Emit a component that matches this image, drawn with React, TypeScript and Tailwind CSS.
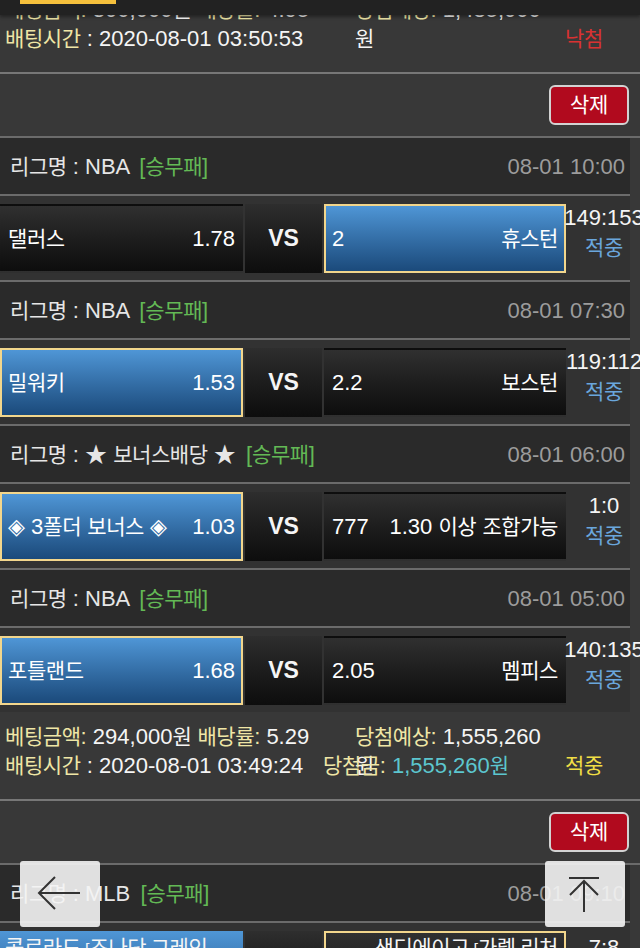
import React from 'react';

type Game = {
  league: string;
  time: string;
  home: string;
  homeOdds: string;
  away: string;
  awayOdds: string;
  pick: 'home' | 'away';
  score: string;
};

const HANGUL = /([\uAC00-\uD7A3\u3131-\u318E]+)/;

// Korean glyphs in the original are a little narrower than Noto's full-width ones
function ko(text: string) {
  return text.split(HANGUL).map((part, i) =>
    HANGUL.test(part) ? (
      <span key={i} className="text-[21px] tracking-[-0.02em]">
        {part}
      </span>
    ) : (
      <React.Fragment key={i}>{part}</React.Fragment>
    )
  );
}

const games: Game[] = [
  { league: 'NBA', time: '08-01 10:00', home: '댈러스', homeOdds: '1.78', away: '휴스턴', awayOdds: '2', pick: 'away', score: '149:153' },
  { league: 'NBA', time: '08-01 07:30', home: '밀워키', homeOdds: '1.53', away: '보스턴', awayOdds: '2.2', pick: 'home', score: '119:112' },
  { league: '★ 보너스배당 ★', time: '08-01 06:00', home: '◈ 3폴더 보너스 ◈', homeOdds: '1.03', away: '1.30 이상 조합가능', awayOdds: '777', pick: 'home', score: '1:0' },
  { league: 'NBA', time: '08-01 05:00', home: '포틀랜드', homeOdds: '1.68', away: '멤피스', awayOdds: '2.05', pick: 'home', score: '140:135' },
];

const Label = ({ children }: { children: string }) => (
  <span className="text-[#efe6a6]">{ko(children)}</span>
);

function Summary({
  amount,
  rate,
  expected,
  time,
  won,
  result,
}: {
  amount: string;
  rate: string;
  expected: string;
  time: string;
  won?: string;
  result: '적중' | '낙첨';
}) {
  return (
    <div className="pt-[10px] pb-[19px] text-[22px] leading-[29px]">
      <div className="flex h-[29px]">
        <div className="w-[355px] flex-none whitespace-nowrap pl-[5px]">
          <Label>베팅금액:</Label> {amount}
          {ko('원')} <Label>배당률:</Label> {rate}
        </div>
        <div className="w-[198px] flex-none break-all">
          <Label>당첨예상:</Label> {expected}
          {ko('원')}
        </div>
      </div>
      <div className="flex h-[29px]">
        <div className="w-[323px] flex-none whitespace-nowrap pl-[5px]">
          <Label>배팅시간</Label> : {time}
        </div>
        <div className="w-[242px] flex-none whitespace-nowrap">
          {won && (
            <>
              <Label>당첨금:</Label>{' '}
              <span className="text-[#5cc6cf]">
                {won}
                {ko('원')}
              </span>
            </>
          )}
        </div>
        <div className={result === '적중' ? 'text-[#f0de45]' : 'text-[#d83232]'}>{ko(result)}</div>
      </div>
    </div>
  );
}

const Divider = () => <div className="h-[2px] bg-[#777777]" />;

function DeleteBar() {
  return (
    <div className="flex justify-end py-[11px] pr-[11px]">
      <button className="h-[40px] w-[80px] rounded-[6px] border-2 border-[#d2d2d2] bg-[#b10a1e] text-white">
        {ko('삭제')}
      </button>
    </div>
  );
}

function LeagueRow({ league, time }: { league: string; time: string }) {
  return (
    <div className="flex h-[56px] items-center justify-between bg-[#2a2a2a] pr-[5px] pl-[10px] text-[22px]">
      <div className="whitespace-nowrap text-[#e6e6e6]">
        {ko('리그명')} : {ko(league)}{' '}
        <span className="ml-[4px] text-[#63b955]">[{ko('승무패')}]</span>
      </div>
      <div className="whitespace-nowrap text-[#9c9c9c]">{time}</div>
    </div>
  );
}

function Box({
  selected,
  className,
  children,
}: {
  selected?: boolean;
  className: string;
  children: React.ReactNode;
}) {
  const skin = selected
    ? 'border-[#f2d68c] bg-linear-to-b from-[#4f96d6] to-[#1b4a7b]'
    : 'border-transparent bg-linear-to-b from-[#303030] to-[#0d0d0d]';
  return (
    <div
      className={`flex h-[69px] flex-none items-center justify-between border-2 px-[6px] text-[22px] text-white ${skin} ${className}`}
    >
      {children}
    </div>
  );
}

function MatchRow({ g }: { g: Game }) {
  return (
    <div className="flex h-[84px] items-center bg-[#323232]">
      <Box selected={g.pick === 'home'} className="w-[243px]">
        <span className="whitespace-nowrap">{ko(g.home)}</span>
        <span>{g.homeOdds}</span>
      </Box>
      <div className="ml-[2px] flex h-[69px] w-[77px] flex-none items-center justify-center bg-linear-to-b from-[#2e2e2e] to-[#0d0d0d] text-[23px] font-bold">
        VS
      </div>
      <Box selected={g.pick === 'away'} className="ml-[2px] w-[242px]">
        <span>{g.awayOdds}</span>
        <span className="whitespace-nowrap">{ko(g.away)}</span>
      </Box>
      <div className="flex w-[76px] flex-none flex-col items-center pb-[8px] leading-[30px]">
        <span className="whitespace-nowrap text-[22px]">{g.score}</span>
        <span className="text-[#6aa6dc]">{ko('적중')}</span>
      </div>
    </div>
  );
}

function Card({ list }: { list: Game[] }) {
  return (
    <div className="w-[630px]">
      {list.map((g, i) => (
        <div key={i}>
          <LeagueRow league={g.league} time={g.time} />
          <div className="h-[2px] bg-[#6b6b6b]" />
          <MatchRow g={g} />
          {i < list.length - 1 && <div className="h-[2px] bg-[#6b6b6b]" />}
        </div>
      ))}
    </div>
  );
}

export default function App() {
  return (
    <div className="relative h-[948px] overflow-hidden bg-[#383838] font-['Liberation_Sans','Noto_Sans_CJK_KR',sans-serif] text-[#f5f5f5]">
      <div className="-mt-[15px]">
        <Summary amount="300,000" rate="4.95" expected="1,485,000" time="2020-08-01 03:50:53" result="낙첨" />
        <Divider />
        <DeleteBar />
        <div className="h-[2px] bg-[#6b6b6b]" />
        <Card list={games} />
        <Summary
          amount="294,000"
          rate="5.29"
          expected="1,555,260"
          time="2020-08-01 03:49:24"
          won="1,555,260"
          result="적중"
        />
        <Divider />
        <DeleteBar />
        <div className="h-[2px] bg-[#6b6b6b]" />

        <div className="w-[630px]">
          <LeagueRow league="MLB" time="08-01 09:10" />
          <div className="h-[2px] bg-[#6b6b6b]" />
          <div className="flex items-start bg-[#323232] pt-[8px]">
            <div className="min-h-[69px] w-[243px] flex-none break-all bg-linear-to-b from-[#4f96d6] to-[#1b4a7b] pt-[4px] pr-[24px] pl-[5px] leading-[26px]">
              {ko('콜로라도 [조나단 그레인저]')}
              <div className="text-right text-[22px]">1.92</div>
            </div>
            <div className="ml-[2px] h-[69px] w-[77px] flex-none bg-linear-to-b from-[#2e2e2e] to-[#0d0d0d]" />
            <div className="ml-[2px] min-h-[69px] w-[242px] flex-none break-all border-2 border-[#f2d68c] bg-linear-to-b from-[#303030] to-[#0d0d0d] pt-[2px] pr-[6px] pl-[30px] text-right leading-[26px]">
              {ko('샌디에이고 [가렐 리처드]')}
              <div className="text-left text-[22px]">1.88</div>
            </div>
            <div className="flex w-[76px] flex-none flex-col items-center pt-[2px] leading-[30px]">
              <span className="text-[22px]">7:8</span>
              <span className="text-[#6aa6dc]">{ko('적중')}</span>
            </div>
          </div>
        </div>
      </div>

      {/* fixed top bar */}
      <div className="fixed inset-x-0 top-0 h-[15px] bg-[#222222] shadow-[0_2px_3px_rgba(0,0,0,0.35)]">
        <div className="absolute top-0 left-[20px] h-[4px] w-[96px] bg-[#f5c03c]" />
      </div>

      {/* floating buttons */}
      <button className="fixed top-[861px] left-[20px] h-[66px] w-[80px] rounded-[3px] bg-[#f4f4f4]/90">
        <svg width="80" height="66" viewBox="0 0 80 66" fill="none" stroke="#333" strokeWidth="2">
          <path d="M19 32 H60" />
          <path d="M35 16 L19 32 L35 48" />
        </svg>
      </button>
      <button className="fixed top-[861px] left-[545px] h-[66px] w-[80px] rounded-[3px] bg-[#f4f4f4]/90">
        <svg width="80" height="66" viewBox="0 0 80 66" fill="none" stroke="#333" strokeWidth="2">
          <path d="M24 17 H54" />
          <path d="M39 20 V51" />
          <path d="M25 34 L39 20 L53 34" />
        </svg>
      </button>
    </div>
  );
}
